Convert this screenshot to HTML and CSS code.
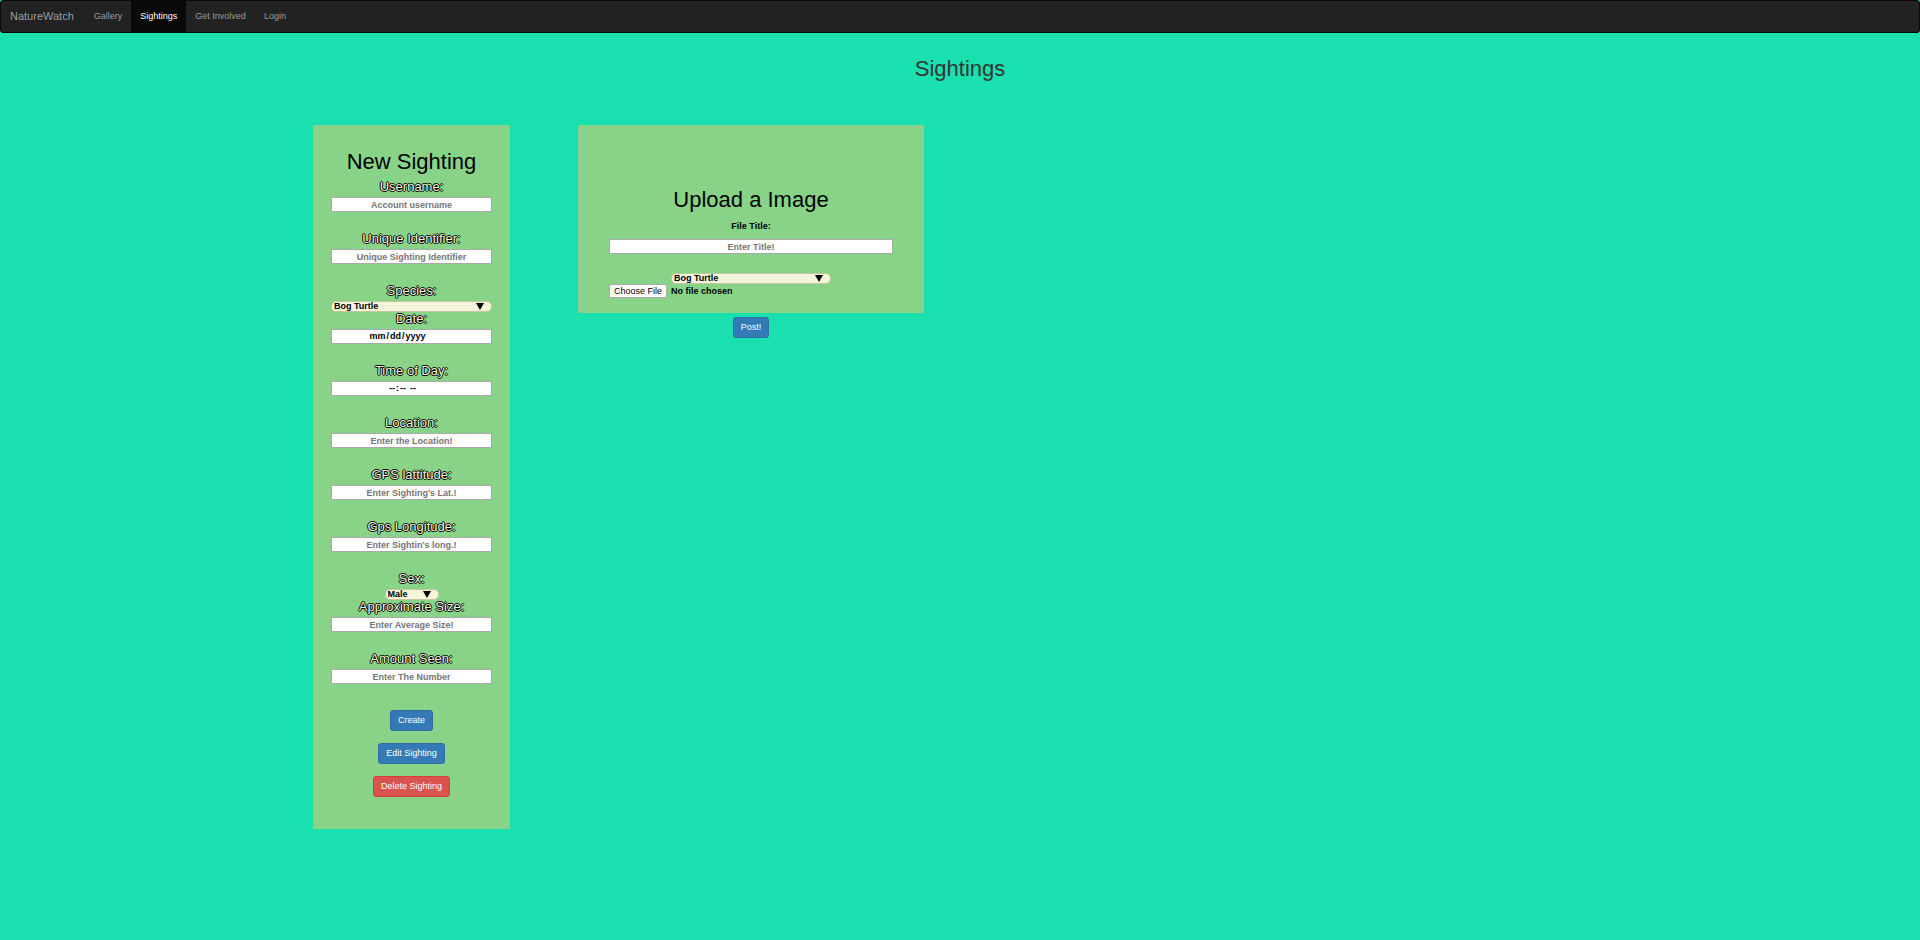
FILE: index.html
```html
<!DOCTYPE html>
<html lang="en-US">
<head>
<meta charset="utf-8">
<title>NatureWatch - Sightings</title>
<link rel="stylesheet" href="styles.css">
</head>
<body>
<nav class="navbar">
  <a class="brand" href="#">NatureWatch</a>
  <a class="nav-link" href="#">Gallery</a>
  <a class="nav-link active" href="#">Sightings</a>
  <a class="nav-link" href="#">Get Involved</a>
  <a class="nav-link" href="#">Login</a>
</nav>
<h1 class="page-title">Sightings</h1>
<main class="columns">
  <form class="panel sighting-form">
    <h2 class="panel-title">New Sighting</h2>
    <div class="field"><label for="username">Username:</label><input class="control" id="username" type="text" placeholder="Account username"></div>
    <div class="field"><label for="identifier">Unique Identifier:</label><input class="control" id="identifier" type="text" placeholder="Unique Sighting Identifier"></div>
    <div class="field field-select"><label for="species">Species:</label><span class="select-wrap"><select id="species"><option>Bog Turtle</option></select></span></div>
    <div class="field"><label for="date">Date:</label><input class="control" id="date" type="date"></div>
    <div class="field"><label for="time">Time of Day:</label><input class="control" id="time" type="time"></div>
    <div class="field"><label for="location">Location:</label><input class="control" id="location" type="text" placeholder="Enter the Location!"></div>
    <div class="field"><label for="lat">GPS lattitude:</label><input class="control" id="lat" type="text" placeholder="Enter Sighting's Lat.!"></div>
    <div class="field"><label for="long">Gps Longitude:</label><input class="control" id="long" type="text" placeholder="Enter Sightin's long.!"></div>
    <div class="field field-select"><label for="sex">Sex:</label><span class="select-wrap select-small"><select id="sex"><option>Male</option></select></span></div>
    <div class="field"><label for="size">Approximate Size:</label><input class="control" id="size" type="text" placeholder="Enter Average Size!"></div>
    <div class="field"><label for="amount">Amount Seen:</label><input class="control" id="amount" type="text" placeholder="Enter The Number"></div>
    <div class="actions">
      <button class="btn" type="button">Create</button>
      <button class="btn" type="button">Edit Sighting</button>
      <button class="btn btn-danger" type="button">Delete Sighting</button>
    </div>
  </form>
  <form class="upload">
    <div class="panel upload-panel">
      <h2 class="panel-title">Upload a Image</h2>
      <label class="plain-label" for="title">File Title:</label>
      <input class="control" id="title" type="text" placeholder="Enter Title!">
      <span class="select-wrap upload-select"><select aria-label="Species"><option>Bog Turtle</option></select></span>
      <input class="file" type="file" aria-label="Image file">
    </div>
    <button class="btn" type="button">Post!</button>
  </form>
</main>
</body>
</html>
```
FILE: styles.css
```css
* { box-sizing: border-box; }
body {
  margin: 0;
  min-height: 100vh;
  background: #1adfae;
  color: #333;
  font: 9px/13px "Liberation Sans", Arial, sans-serif;
}
.navbar {
  display: flex;
  height: 33px;
  padding-right: 10px;
  background: #222;
  border: 1px solid #080808;
  border-radius: 3px;
}
.navbar a {
  padding: 0 9px;
  color: #9d9d9d;
  line-height: 30px;
  text-decoration: none;
}
.navbar .brand { padding-right: 11px; font-size: 11px; }
.navbar .active { background: #080808; color: #fff; }
.page-title {
  margin: 22px 0 43px;
  font-size: 22px;
  font-weight: 400;
  line-height: 27px;
  text-align: center;
}
.columns {
  display: flex;
  align-items: flex-start;
  gap: 68px;
  padding-left: 313px;
}
.panel {
  background: #88d388;
  color: #000;
  text-align: center;
}
.sighting-form { width: 197px; padding: 23px 18px 32px; }
.panel-title {
  margin: 0;
  font-size: 22px;
  font-weight: 400;
  line-height: 27px;
}
.sighting-form .panel-title { margin-bottom: 5px; }
.field {
  display: flex;
  flex-direction: column;
  align-items: center;
  gap: 3px;
  margin-bottom: 20px;
}
.field-select { gap: 3px; margin-bottom: 0; }
.field label {
  color: beige;
  font-size: 13px;
  font-weight: 400;
  line-height: 14px;
  text-shadow: -1px 0 #000, 0 1px #000, 1px 0 #000, 0 -1px #000;
}
.control {
  display: block;
  width: 100%;
  height: 15px;
  padding: 0 1px;
  background: #fff;
  border: 1px solid #a9a9a9;
  border-radius: 0;
  color: #000;
  font: 700 9px/11px "Liberation Sans", Arial, sans-serif;
  text-align: center;
}
.control[type="date"] { padding-right: 16px; }
.control[type="time"] { padding-left: 6px; }
.control::placeholder { color: #757575; opacity: 1; }
.control::-webkit-calendar-picker-indicator { opacity: 0; width: 9px; height: 9px; }
.select-wrap { position: relative; display: block; width: 100%; }
.select-wrap select {
  display: block;
  width: 100%;
  height: 11px;
  padding: 0 2px;
  appearance: none;
  background: beige;
  border: 1px solid #c5c5a0;
  border-radius: 5px;
  color: #000;
  font: 700 9px/9px "Liberation Sans", Arial, sans-serif;
}
.select-wrap::after {
  content: "";
  position: absolute;
  top: 2px;
  right: 8px;
  border: solid transparent;
  border-width: 7px 4px 0;
  border-top-color: #000;
  pointer-events: none;
}
.select-small { width: 54px; }
.actions {
  display: flex;
  flex-direction: column;
  align-items: center;
  gap: 12px;
  padding-top: 6px;
}
.btn {
  height: 21px;
  padding: 0 7px;
  background: #337ab7;
  border: 1px solid #2e6da4;
  border-radius: 3px;
  color: #fff;
  font: 9px/13px "Liberation Sans", Arial, sans-serif;
}
.btn-danger { background: #d9534f; border-color: #d43f3a; }
.upload {
  display: flex;
  flex-direction: column;
  align-items: center;
  gap: 4px;
  width: 346px;
}
.upload-panel { width: 100%; padding: 61px 31px 15px; }
.plain-label { display: block; margin: 7px 0 6px; font-weight: 700; }
.upload-select { width: 160px; margin: 19px auto 0; }
.file {
  display: block;
  width: 100%;
  height: 14px;
  font: 700 9px/13px "Liberation Sans", Arial, sans-serif;
}
.file::file-selector-button {
  height: 14px;
  margin: 0 4px 0 0;
  padding: 0 4px;
  background: #fff;
  border: 1px solid #a9a9a9;
  border-radius: 2px;
  color: #000;
  font: 9px/11px "Liberation Sans", Arial, sans-serif;
}
```
